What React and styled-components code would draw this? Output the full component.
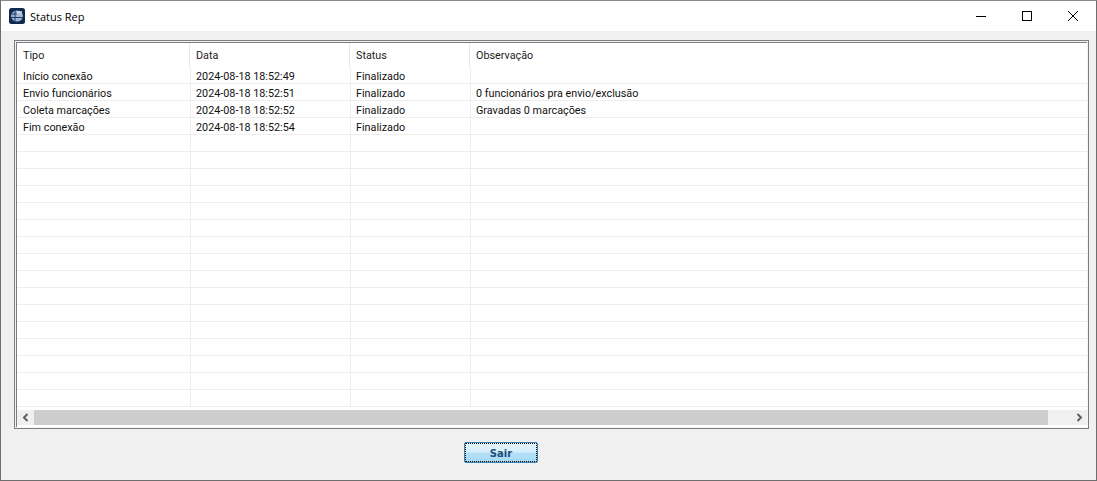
import React from 'react';
import styled, { createGlobalStyle } from 'styled-components';

const Global = createGlobalStyle`
  html, body { margin: 0; padding: 0; background: #f0f0f0; overflow: hidden; }
`;

const Win = styled.div`
  box-sizing: border-box;
  width: 1097px;
  height: 481px;
  border: 1px solid #6e6e6e;
  border-top-color: #8a8a8a;
  background: #f0f0f0;
  display: flex;
  flex-direction: column;
  font-family: "Liberation Sans", Arial, sans-serif;
  color: #111;
  overflow: hidden;
`;

const TitleBar = styled.div`
  height: 30px;
  flex: none;
  background: #fff;
  display: flex;
  align-items: center;
  padding-left: 8px;
`;

const AppIcon = styled.svg`
  width: 16px;
  height: 16px;
  flex: none;
`;

const Title = styled.div`
  margin-left: 5px;
  font-family: "Open Sans", sans-serif;
  font-size: 11px;
  flex: 1;
  color: #000;
`;

const WinBtn = styled.div`
  width: 46px;
  height: 30px;
  display: flex;
  align-items: center;
  justify-content: center;
`;

const Body = styled.div`
  flex: 1;
  display: flex;
  flex-direction: column;
  padding: 9px 7px 0 13px;
`;

const Frame = styled.div`
  box-sizing: border-box;
  height: 389px;
  flex: none;
  border: 1px solid #7a7d82;
  padding: 1px;
  background: #f4f4f4;
  display: flex;
`;

const Inner = styled.div`
  flex: 1;
  min-width: 0;
  border-top: 1px solid #7a7d82;
  border-left: 1px solid #7a7d82;
  background: #fff;
  display: flex;
  flex-direction: column;
`;

const Grid = styled.div`
  flex: 1;
  overflow: hidden;
`;

const HeadRow = styled.div`
  display: grid;
  grid-template-columns: 173px 160px 120px 1fr;
  height: 24px;
`;

const Row = styled.div`
  display: grid;
  grid-template-columns: 174px 160px 120px 1fr;
  height: 17px;
`;

const HeadCell = styled.div`
  padding-left: 6px;
  font-family: Roboto, sans-serif;
  font-size: 10.8px;
  line-height: 25px;
  color: #222;
  border-right: 1px solid #e8e8e8;
  height: 24px;
  &:last-child { border-right: 0; }
`;

const Cell = styled.div`
  padding-left: 5px;
  font-family: Roboto, sans-serif;
  font-size: 10.8px;
  line-height: 19px;
  height: 17px;
  box-sizing: border-box;
  color: #111;
  white-space: nowrap;
  border-right: 1px solid #eee;
  border-bottom: 1px solid #eee;
  &:first-child { padding-left: 6px; }
  &:last-child { border-right: 0; }
`;

const HScroll = styled.div`
  flex: none;
  height: 15px;
  margin-bottom: 2px;
  background: #f0f0f0;
  display: flex;
  align-items: center;
`;

const Arrow = styled.div`
  width: 17px;
  height: 15px;
  flex: none;
  display: flex;
  align-items: center;
  justify-content: center;
`;

const Thumb = styled.div`
  height: 15px;
  flex: 1;
  background: #cdcdcd;
  margin-right: 22px;
`;

const Footer = styled.div`
  flex: 1;
  display: flex;
  padding-top: 13px;
  padding-left: 450px;
  align-items: flex-start;
`;

const Button = styled.button`
  box-sizing: border-box;
  width: 74px;
  height: 21px;
  padding: 2px 0 0;
  border: 1px solid #3c7fb1;
  border-radius: 2px;
  outline: 1px dotted #111;
  outline-offset: -2px;
  background: linear-gradient(#e5f4fc 0%, #d6eefb 48%, #b4e0f8 52%, #a6d9f4 100%);
  font-family: "DejaVu Sans", sans-serif;
  font-size: 10px;
  font-weight: 700;
  color: #1f4e79;
`;

const rows = [
  ['Início conexão', '2024-08-18 18:52:49', 'Finalizado', ''],
  ['Envio funcionários', '2024-08-18 18:52:51', 'Finalizado', '0 funcionários pra envio/exclusão'],
  ['Coleta marcações', '2024-08-18 18:52:52', 'Finalizado', 'Gravadas 0 marcações'],
  ['Fim conexão', '2024-08-18 18:52:54', 'Finalizado', ''],
  ...Array.from({ length: 16 }, () => ['', '', '', '']),
];

export default function App() {
  return (
    <Win>
      <Global />
      <TitleBar>
        <AppIcon viewBox="0 0 16 16">
          <rect width="16" height="16" rx="2.5" fill="#10294f" />
          <ellipse cx="8" cy="8" rx="6" ry="5.6" fill="#9fb3cc" />
          <path d="M2 6h12M2 9.5h12M6 2.5v11" stroke="#1f3f6e" strokeWidth="1" />
          <path d="M8 3h5v4H8z" fill="#d9e2ee" opacity=".7" />
        </AppIcon>
        <Title>Status Rep</Title>
        <WinBtn>
          <svg width="10" height="10" viewBox="0 0 10 10"><path d="M0 5.5h10" stroke="#000" /></svg>
        </WinBtn>
        <WinBtn>
          <svg width="10" height="10" viewBox="0 0 10 10"><rect x=".5" y=".5" width="9" height="9" fill="none" stroke="#000" /></svg>
        </WinBtn>
        <WinBtn>
          <svg width="10" height="10" viewBox="0 0 10 10"><path d="M0 0l10 10M10 0L0 10" stroke="#000" strokeWidth="1" /></svg>
        </WinBtn>
      </TitleBar>
      <Body>
        <Frame>
          <Inner>
            <Grid>
              <HeadRow>
                <HeadCell>Tipo</HeadCell>
                <HeadCell>Data</HeadCell>
                <HeadCell>Status</HeadCell>
                <HeadCell>Observação</HeadCell>
              </HeadRow>
              {rows.map((r, i) => (
                <Row key={i}>
                  {r.map((c, j) => <Cell key={j}>{c}</Cell>)}
                </Row>
              ))}
            </Grid>
            <HScroll>
              <Arrow>
                <svg width="8" height="9" viewBox="0 0 8 9"><path d="M5.5 1L2 4.5 5.5 8" fill="none" stroke="#606060" strokeWidth="2" /></svg>
              </Arrow>
              <Thumb />
              <Arrow>
                <svg width="8" height="9" viewBox="0 0 8 9"><path d="M2.5 1L6 4.5 2.5 8" fill="none" stroke="#606060" strokeWidth="2" /></svg>
              </Arrow>
            </HScroll>
          </Inner>
        </Frame>
        <Footer>
          <Button>Sair</Button>
        </Footer>
      </Body>
    </Win>
  );
}
